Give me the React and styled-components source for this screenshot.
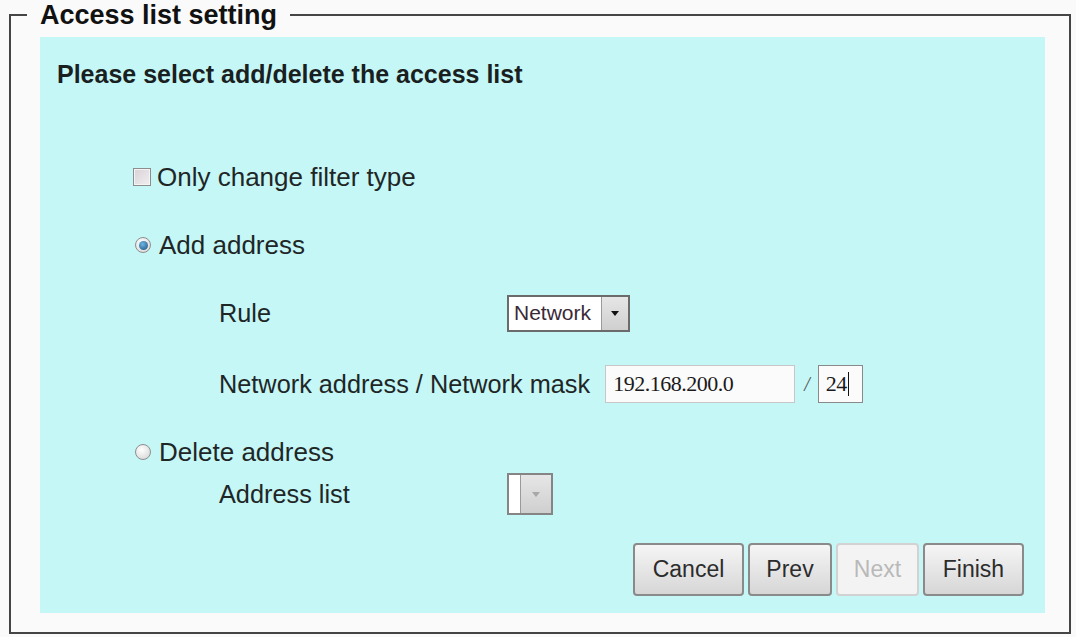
import React from 'react';
import styled, { createGlobalStyle } from 'styled-components';

const GlobalStyle = createGlobalStyle`
    html, body {
        margin: 0;
        padding: 0;
        background: #fafafa;
    }
    body {
        font-family: "Liberation Sans", Arial, sans-serif;
        color: #1f2626;
    }
`;

// Styling
const Page = styled.div`
    padding: 0 5px 0 9px;
`;

const Frame = styled.fieldset`
    margin: 0;
    padding: 7px 24px 19px 29px;
    border: 2px solid #454545;
    min-width: 0;
`;

const Legend = styled.legend`
    margin-left: -13px;
    padding: 0 13px;
    font-size: 27px;
    font-weight: bold;
    line-height: 30px;
    color: #111;
`;

const Panel = styled.div`
    display: flex;
    flex-direction: column;
    background: #c5f7f7;
    padding: 23px 21px 17px 17px;
`;

const Heading = styled.div`
    font-size: 25px;
    font-weight: bold;
    line-height: 28px;
    color: #1a1f1f;
`;

const Options = styled.div`
    display: flex;
    flex-direction: column;
    padding-left: 76px;
`;

const OptionRow = styled.label`
    display: flex;
    align-items: center;
    height: 36px;
    margin-top: ${(p) => p.$gap}px;
    font-size: 26px;
`;

const Checkbox = styled.span`
    width: 16px;
    height: 16px;
    margin-right: 6px;
    border: 1px solid #8d8d8d;
    background: linear-gradient(135deg, #d8d2d6 0%, #f2eef0 100%);
    box-shadow: inset 0 0 0 1px #f4f4f4;
`;

const Radio = styled.span`
    position: relative;
    width: 14px;
    height: 14px;
    margin: 0 8px 0 2px;
    border-radius: 50%;
    border: 1px solid #8e8e8e;
    background: radial-gradient(circle at 40% 35%, #ffffff 0%, #d2d2d2 100%);
    &::after {
        content: '';
        display: ${(p) => (p.$checked ? 'block' : 'none')};
        position: absolute;
        left: 2.5px;
        top: 2.5px;
        width: 9px;
        height: 9px;
        border-radius: 50%;
        background: radial-gradient(circle at 40% 35%, #6fb6e4 0%, #1b4f7c 100%);
    }
`;

const SubRow = styled.div`
    display: flex;
    align-items: center;
    height: ${(p) => p.$height || 38}px;
    margin-top: ${(p) => p.$gap}px;
    margin-left: 86px;
    font-size: 25.3px;
`;

const FieldLabel = styled.span`
    width: ${(p) => (p.$width ? `${p.$width}px` : 'auto')};
    margin-right: ${(p) => p.$space || 0}px;
    flex-shrink: 0;
`;

const Select = styled.div`
    display: flex;
    align-items: stretch;
    width: ${(p) => p.$width}px;
    height: ${(p) => p.$height}px;
    box-sizing: border-box;
    border: 2px solid ${(p) => (p.$disabled ? '#858585' : '#6b6b6b')};
    background: #fff;
`;

const SelectValue = styled.span`
    flex: 1;
    display: flex;
    align-items: center;
    padding-left: 5px;
    font-size: 21px;
    color: #3a2a38;
`;

const SelectArrow = styled.span`
    display: flex;
    align-items: center;
    justify-content: center;
    width: ${(p) => p.$width}px;
    border-left: 1px solid #9a9a9a;
    background: linear-gradient(#e6e6e6, #cfcfcf);
    &::before {
        content: '';
        border-left: 4px solid transparent;
        border-right: 4px solid transparent;
        border-top: 5px solid ${(p) => (p.$disabled ? '#a8a8a8' : '#111')};
    }
`;

const TextBox = styled.div`
    display: flex;
    align-items: center;
    width: ${(p) => p.$width}px;
    height: 38px;
    box-sizing: border-box;
    padding-left: 7px;
    border: 1px solid ${(p) => (p.$focus ? '#8a8a8a' : '#c6c6c6')};
    background: #fbfbfb;
    font-family: "Liberation Serif", "Times New Roman", serif;
    font-size: 22px;
    letter-spacing: -0.5px;
    color: #1a1a1a;
`;

const Caret = styled.span`
    display: inline-block;
    width: 1px;
    height: 24px;
    margin-left: 1px;
    background: #111;
`;

const Slash = styled.span`
    margin: 0 8px 0 9px;
    font-family: "Liberation Serif", serif;
    font-style: italic;
    font-size: 20px;
    color: #555;
`;

const ButtonBar = styled.div`
    display: flex;
    justify-content: flex-end;
    gap: 4px;
    margin-top: 28px;
    margin-right: 0;
`;

const Button = styled.button`
    width: ${(p) => p.$width}px;
    height: 53px;
    padding: 0;
    border-radius: 4px;
    border: 2px solid ${(p) => (p.disabled ? '#d2d2d2' : '#8a8a8a')};
    background: ${(p) =>
        p.disabled ? '#f3f3f3' : 'linear-gradient(#f5f5f5 0%, #e6e6e6 50%, #d6d6d6 100%)'};
    font-family: "Liberation Sans", Arial, sans-serif;
    font-size: 23px;
    color: ${(p) => (p.disabled ? '#b9b9b9' : '#2c2c2c')};
`;

export default function App() {
    return (
        <>
            <GlobalStyle />
            <Page>
                <Frame>
                    <Legend>Access list setting</Legend>
                    <Panel>
                        <Heading>Please select add/delete the access list</Heading>

                        <Options>
                            <OptionRow $gap={71}>
                                <Checkbox />
                                Only change filter type
                            </OptionRow>

                            <OptionRow $gap={32}>
                                <Radio $checked />
                                Add address
                            </OptionRow>

                            <SubRow $gap={31}>
                                <FieldLabel $width={288}>Rule</FieldLabel>
                                <Select $width={123} $height={37}>
                                    <SelectValue>Network</SelectValue>
                                    <SelectArrow $width={26} />
                                </Select>
                            </SubRow>

                            <SubRow $gap={33}>
                                <FieldLabel $space={15}>Network address / Network mask</FieldLabel>
                                <TextBox $width={190}>192.168.200.0</TextBox>
                                <Slash>/</Slash>
                                <TextBox $width={45} $focus>
                                    24<Caret />
                                </TextBox>
                            </SubRow>

                            <OptionRow $gap={31}>
                                <Radio />
                                Delete address
                            </OptionRow>

                            <SubRow $gap={3} $height={42}>
                                <FieldLabel $width={288}>Address list</FieldLabel>
                                <Select $width={46} $height={42} $disabled>
                                    <SelectValue />
                                    <SelectArrow $width={30} $disabled />
                                </Select>
                            </SubRow>
                        </Options>

                        <ButtonBar>
                            <Button $width={111}>Cancel</Button>
                            <Button $width={84}>Prev</Button>
                            <Button $width={83} disabled>Next</Button>
                            <Button $width={101}>Finish</Button>
                        </ButtonBar>
                    </Panel>
                </Frame>
            </Page>
        </>
    );
}
